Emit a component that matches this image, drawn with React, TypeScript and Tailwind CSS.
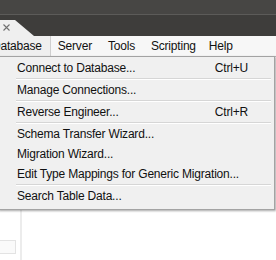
export default function App() {
  const Item = ({ label, shortcut }: { label: string; shortcut?: string }) => (
    <div className="h-[20px] flex items-center justify-between pl-[18px] pr-[26px] text-[#111]">
      <span>{label}</span>
      {shortcut ? <span>{shortcut}</span> : null}
    </div>
  );
  const Sep = () => <div className="h-[2px] ml-[17px] mr-[3px] border-t border-[#d6d6d6] border-b border-b-white" />;
  return (
    <div
      className="w-[276px] h-[260px] overflow-hidden bg-white relative text-[12px] leading-none tracking-[-0.2px]"
      style={{ fontFamily: '"Liberation Sans", Arial, sans-serif' }}
    >
      <div className="h-[14px] bg-[#474644]" />
      <div className="h-px bg-[#5c5b59]" />
      <div className="h-[21px] bg-[#3e3d3b] flex items-end">
        <div className="w-[34px] h-[16px] bg-[#efefef] [clip-path:polygon(0_0,15px_0,34px_16px,0_16px)] flex items-start pl-[3px] pt-[4px]">
          <svg width="7" height="7" viewBox="0 0 7 7">
            <path d="M0.5 0.5L6.5 6.5M6.5 0.5L0.5 6.5" stroke="#707070" strokeWidth="1.1" />
          </svg>
        </div>
      </div>
      <div className="h-[20px] bg-[#f7f7f7] flex items-center text-[#111]">
        <div className="h-full -ml-[14px] pl-[6px] pr-[8px] flex items-center bg-[#efefef] border-r border-[#cfcfcf]">Database</div>
        <div className="ml-[7px]">Server</div>
        <div className="ml-[16px]">Tools</div>
        <div className="ml-[16px]">Scripting</div>
        <div className="ml-[13px]">Help</div>
      </div>
      <div className="flex h-[204px] border-t border-[#bdbdbd]">
        <div className="w-[20px] flex flex-col justify-end pb-[6px]">
          <div className="h-[14px] w-[17px] -ml-px border border-[#e3e3e3] bg-[#fafafa]" />
        </div>
        <div className="w-[2px] bg-[#ececec]" />
        <div className="flex-1 bg-white" />
      </div>
      <div className="absolute left-[-2px] top-[56px] w-[277px] border border-[#a3a3a3] bg-[#f0f0f0] pt-px pb-[3px] shadow-[1px_1px_2px_rgba(0,0,0,0.35)]">
        <Item label="Connect to Database..." shortcut="Ctrl+U" />
        <Sep />
        <Item label="Manage Connections..." />
        <Sep />
        <Item label="Reverse Engineer..." shortcut="Ctrl+R" />
        <Sep />
        <Item label="Schema Transfer Wizard..." />
        <Item label="Migration Wizard..." />
        <Item label="Edit Type Mappings for Generic Migration..." />
        <Sep />
        <Item label="Search Table Data..." />
      </div>
    </div>
  );
}
